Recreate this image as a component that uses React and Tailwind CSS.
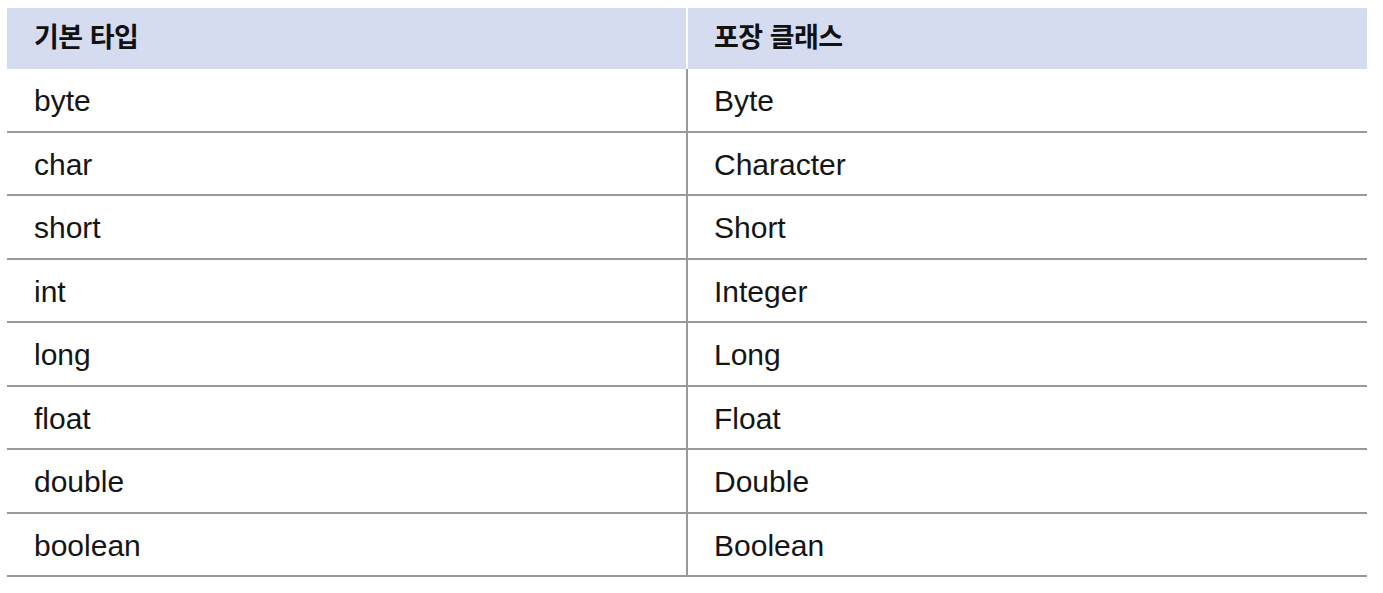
import React from "react";

const rows = [
  ["byte", "Byte"],
  ["char", "Character"],
  ["short", "Short"],
  ["int", "Integer"],
  ["long", "Long"],
  ["float", "Float"],
  ["double", "Double"],
  ["boolean", "Boolean"],
];

const font = { fontFamily: '"Liberation Sans", "Noto Sans CJK KR", sans-serif' };

export default function App() {
  return (
    <div className="min-h-[593px] w-full bg-white pt-[8px] pl-[7px]" style={font}>
      <div className="w-[1360px]">
        <div className="grid h-[61px] grid-cols-[681px_679px] bg-[#d6dcef] text-[27px] font-bold tracking-[-0.5px] text-[#111]">
          <div className="flex items-center border-r-2 border-white pl-[27px]">기본 타입</div>
          <div className="flex items-center pl-[26px]">포장 클래스</div>
        </div>
        {rows.map(([prim, wrap]) => (
          <div
            key={prim}
            className="grid h-[63.5px] grid-cols-[681px_679px] border-b-2 border-[#999999] text-[30px] text-[#151515]"
          >
            <div className="flex items-center border-r-2 border-[#999999] pl-[27px] pt-[2px]">{prim}</div>
            <div className="flex items-center pl-[26px] pt-[2px]">{wrap}</div>
          </div>
        ))}
      </div>
    </div>
  );
}
